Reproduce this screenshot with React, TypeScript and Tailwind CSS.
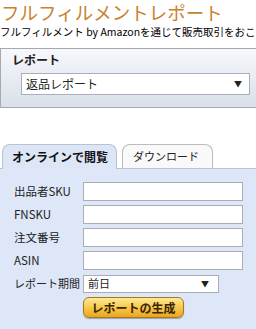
const jp = "font-['MS_UI_Gothic','Noto_Sans_CJK_JP',sans-serif]";

const Field = ({ label }: { label: string }) => (
  <div className="flex h-[23px] items-center">
    <span className="w-[69px] text-[11.5px] whitespace-nowrap text-[#222]">{label}</span>
    <input
      type="text"
      className="h-[19px] w-[160px] border border-[#a9aeb6] bg-white outline-none"
    />
  </div>
);

const App = () => {
  return (
    <div className={`h-[329px] w-[256px] overflow-hidden bg-white ${jp}`}>
      <h1 className="h-[24px] overflow-hidden pl-[1px] text-[18.5px] leading-[24px] whitespace-nowrap text-[#c9822f]">
        フルフィルメントレポート
      </h1>
      <p className="h-[16px] overflow-hidden text-[10.5px] leading-[16px] whitespace-nowrap text-black">
        フルフィルメント by Amazonを通じて販売取引をおこなった出品者
      </p>

      <section className="mt-[8px] h-[60px] w-[262px] border border-[#a3aab5] bg-linear-to-b from-[#f6f8fb] to-[#d9e0ea] pt-[3px]">
        <h2 className="pl-[11px] text-[12px] leading-[16px] font-bold text-[#222]">
          レポート
        </h2>
        <div className="mt-[5px] ml-[20px] flex h-[22px] w-[229px] items-center justify-between border border-[#a8afb8] bg-white pr-[7px] pl-[4px]">
          <span className="text-[12px] text-[#222]">返品レポート</span>
          <span className="text-[8px] text-[#222]">▼</span>
        </div>
      </section>

      <div className="mt-[36px] flex items-end pl-[2px]">
        <div className="relative z-10 -mb-px flex h-[25px] w-[115px] items-center rounded-t-[8px] border border-b-0 border-[#b8c2d2] bg-[#dce6f7] pl-[9px]">
          <span className="text-[12px] font-bold whitespace-nowrap text-[#111]">オンラインで閲覧</span>
        </div>
        <div className="ml-[5px] flex h-[24px] w-[91px] items-center rounded-t-[8px] border border-b-0 border-[#bcbcbc] bg-[#f9f9f9] pl-[10px]">
          <span className="text-[11px] whitespace-nowrap text-[#222]">ダウンロード</span>
        </div>
      </div>

      <div className="h-[200px] border-t border-[#b8c4d6] bg-[#dde7f8] pt-[11px] pl-[14px]">
        <Field label="出品者SKU" />
        <Field label="FNSKU" />
        <Field label="注文番号" />
        <Field label="ASIN" />
        <div className="flex h-[23px] items-center">
          <span className="w-[69px] text-[11px] whitespace-nowrap text-[#222]">レポート期間</span>
          <div className="flex h-[18px] w-[136px] items-center justify-between border border-[#a9aeb6] bg-white pr-[9px] pl-[4px]">
            <span className="text-[11px] text-[#222]">前日</span>
            <span className="text-[8px] text-[#222]">▼</span>
          </div>
        </div>
        <button
          type="button"
          className="mt-[2px] ml-[69px] flex h-[21px] w-[101px] items-center justify-center rounded-[6px] border border-[#a5791c] bg-linear-to-b from-[#fde992] via-[#f7c94a] to-[#e9a51c] text-[12px] font-bold text-[#3a2606] shadow-[0_1px_1px_rgba(0,0,0,0.3)]"
        >
          レポートの生成
        </button>
      </div>
    </div>
  );
};

export default App;
